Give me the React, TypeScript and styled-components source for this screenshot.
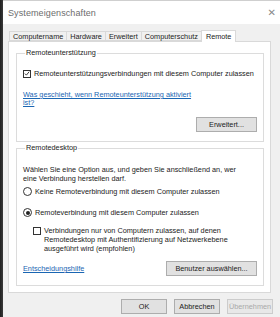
import React from "react";
import styled, { createGlobalStyle } from "styled-components";

const Global = createGlobalStyle`
  html, body { margin: 0; padding: 0; background: #f0f0f0; }
  body { font-family: "Liberation Sans", Arial, sans-serif; }
`;

const Screen = styled.div`
  width: 280px;
  height: 317px;
  display: flex;
  overflow: hidden;
  background: #f0f0f0;
`;

const Edge = styled.div`
  width: 3px;
  flex: none;
  background: linear-gradient(to right, #1f1f1f, #3a3a3a);
`;

const Window = styled.div`
  flex: 1;
  display: flex;
  flex-direction: column;
  border-top: 1px solid #cfcfcf;
  min-width: 0;
`;

const TitleBar = styled.div`
  height: 23px;
  background: #ffffff;
  display: flex;
  align-items: center;
  justify-content: space-between;
  padding: 0 4px 0 5px;
  flex: none;
`;

const Title = styled.span`
  font-size: 9px;
  color: #6d6d6d;
  letter-spacing: 0.1px;
`;

const Close = styled.span`
  font-size: 10px;
  color: #8a8a8a;
  font-family: "DejaVu Sans", sans-serif;
`;

const Body = styled.div`
  flex: 1;
  display: flex;
  flex-direction: column;
  padding: 5px 9px 0 5px;
  font-size: 7.3px;
  color: #222;
`;

const TabStrip = styled.div`
  display: flex;
  align-items: flex-end;
  height: 12px;
  padding-left: 2px;
`;

const Tab = styled.div<{ $active?: boolean }>`
  height: ${(p) => (p.$active ? "12px" : "10px")};
  box-sizing: border-box;
  padding: 0 ${(p) => (p.$active ? "4px" : "3px")};
  display: flex;
  align-items: center;
  border: 1px solid #d9d9d9;
  border-bottom: ${(p) => (p.$active ? "none" : "1px solid #d9d9d9")};
  margin-left: -1px;
  background: ${(p) => (p.$active ? "#ffffff" : "#f0f0f0")};
  position: relative;
  z-index: ${(p) => (p.$active ? 1 : 0)};
  margin-bottom: ${(p) => (p.$active ? "-1px" : "0")};
  white-space: nowrap;
`;

const Panel = styled.div`
  height: 252px;
  box-sizing: border-box;
  background: #ffffff;
  border: 1px solid #d9d9d9;
  padding: 7px 6px 0 7px;
  display: flex;
  flex-direction: column;
  gap: 2px;
`;

const Group = styled.fieldset<{ $h: number }>`
  margin: 0;
  height: ${(p) => p.$h}px;
  box-sizing: border-box;
  border: 1px solid #dcdcdc;
  padding: 0 6px 0 6px;
  display: flex;
  flex-direction: column;
  min-width: 0;
`;

const Legend = styled.legend`
  padding: 0 1px;
  margin-left: 2px;
  font-size: 7.3px;
  line-height: 8px;
  color: #222;
`;

const CheckRow = styled.label<{ $top: number; $indent?: number }>`
  display: flex;
  align-items: flex-start;
  gap: 3px;
  margin-top: ${(p) => p.$top}px;
  margin-left: ${(p) => p.$indent ?? 0}px;
  line-height: 9px;
`;

const Box = styled.span`
  width: 8px;
  height: 8px;
  flex: none;
  box-sizing: border-box;
  border: 1px solid #333;
  background: #fff;
  display: flex;
  align-items: center;
  justify-content: center;
  margin-top: 0.5px;
`;

const Radio = styled.span<{ $on?: boolean }>`
  width: 9px;
  height: 9px;
  flex: none;
  box-sizing: border-box;
  border: 1px solid #333;
  border-radius: 50%;
  background: #fff;
  display: flex;
  align-items: center;
  justify-content: center;
  &::after {
    content: "";
    width: 4px;
    height: 4px;
    border-radius: 50%;
    background: ${(p) => (p.$on ? "#222" : "transparent")};
  }
`;

const Link = styled.a<{ $top: number; $bottom?: number }>`
  color: #1a66b3;
  text-decoration: underline;
  margin-top: ${(p) => p.$top}px;
  margin-bottom: ${(p) => p.$bottom ?? 0}px;
  line-height: 8px;
  display: block;
`;

const Para = styled.p`
  margin: 13px 0 0 0;
  line-height: 9px;
`;

const Button = styled.button<{ $w: number; $disabled?: boolean }>`
  width: ${(p) => p.$w}px;
  height: 15px;
  box-sizing: border-box;
  border: 1px solid ${(p) => (p.$disabled ? "#cccccc" : "#adadad")};
  background: ${(p) => (p.$disabled ? "#e8e8e8" : "#e1e1e1")};
  color: ${(p) => (p.$disabled ? "#a8a8a8" : "#222")};
  font-family: "Liberation Sans", Arial, sans-serif;
  font-size: 7.3px;
  padding: 0;
  display: flex;
  align-items: center;
  justify-content: center;
`;

const BottomRow = styled.div<{ $top: number }>`
  display: flex;
  justify-content: space-between;
  align-items: flex-end;
  margin-top: ${(p) => p.$top}px;
`;

const RightRow = styled.div<{ $top: number }>`
  display: flex;
  justify-content: flex-end;
  margin-top: ${(p) => p.$top}px;
`;

const Footer = styled.div`
  display: flex;
  justify-content: flex-end;
  gap: 7px;
  padding-top: 6px;
  margin-right: -2px;
`;

const Check = () => (
  <svg width="7" height="7" viewBox="0 0 7 7">
    <path d="M1 3.6 L2.8 5.4 L6 1.4" fill="none" stroke="#222" strokeWidth="1" />
  </svg>
);

export default function App() {
  return (
    <>
      <Global />
      <Screen>
        <Edge />
        <Window>
          <TitleBar>
            <Title>Systemeigenschaften</Title>
            <Close>✕</Close>
          </TitleBar>
          <Body>
            <TabStrip>
              <Tab>Computername</Tab>
              <Tab>Hardware</Tab>
              <Tab>Erweitert</Tab>
              <Tab>Computerschutz</Tab>
              <Tab $active>Remote</Tab>
            </TabStrip>
            <Panel>
              <Group $h={93}>
                <Legend>Remoteunterstützung</Legend>
                <CheckRow $top={12}>
                  <Box>
                    <Check />
                  </Box>
                  Remoteunterstützungsverbindungen mit diesem Computer zulassen
                </CheckRow>
                <Link $top={13}>
                  Was geschieht, wenn Remoteunterstützung aktiviert
                  <br />
                  ist?
                </Link>
                <RightRow $top={10}>
                  <Button $w={61}>Erweitert...</Button>
                </RightRow>
              </Group>
              <Group $h={142}>
                <Legend>Remotedesktop</Legend>
                <Para>
                  Wählen Sie eine Option aus, und geben Sie anschließend an, wer
                  <br />
                  eine Verbindung herstellen darf.
                </Para>
                <CheckRow $top={4}>
                  <Radio />
                  Keine Remoteverbindung mit diesem Computer zulassen
                </CheckRow>
                <CheckRow $top={12}>
                  <Radio $on />
                  Remoteverbindung mit diesem Computer zulassen
                </CheckRow>
                <CheckRow $top={9} $indent={10}>
                  <Box />
                  <span>
                    Verbindungen nur von Computern zulassen, auf denen
                    <br />
                    Remotedesktop mit Authentifizierung auf Netzwerkebene
                    <br />
                    ausgeführt wird (empfohlen)
                  </span>
                </CheckRow>
                <BottomRow $top={8}>
                  <Link $top={0} $bottom={3}>
                    Entscheidungshilfe
                  </Link>
                  <Button $w={91}>Benutzer auswählen...</Button>
                </BottomRow>
              </Group>
            </Panel>
            <Footer>
              <Button $w={46}>OK</Button>
              <Button $w={46}>Abbrechen</Button>
              <Button $w={46} $disabled>
                Übernehmen
              </Button>
            </Footer>
          </Body>
        </Window>
      </Screen>
    </>
  );
}
